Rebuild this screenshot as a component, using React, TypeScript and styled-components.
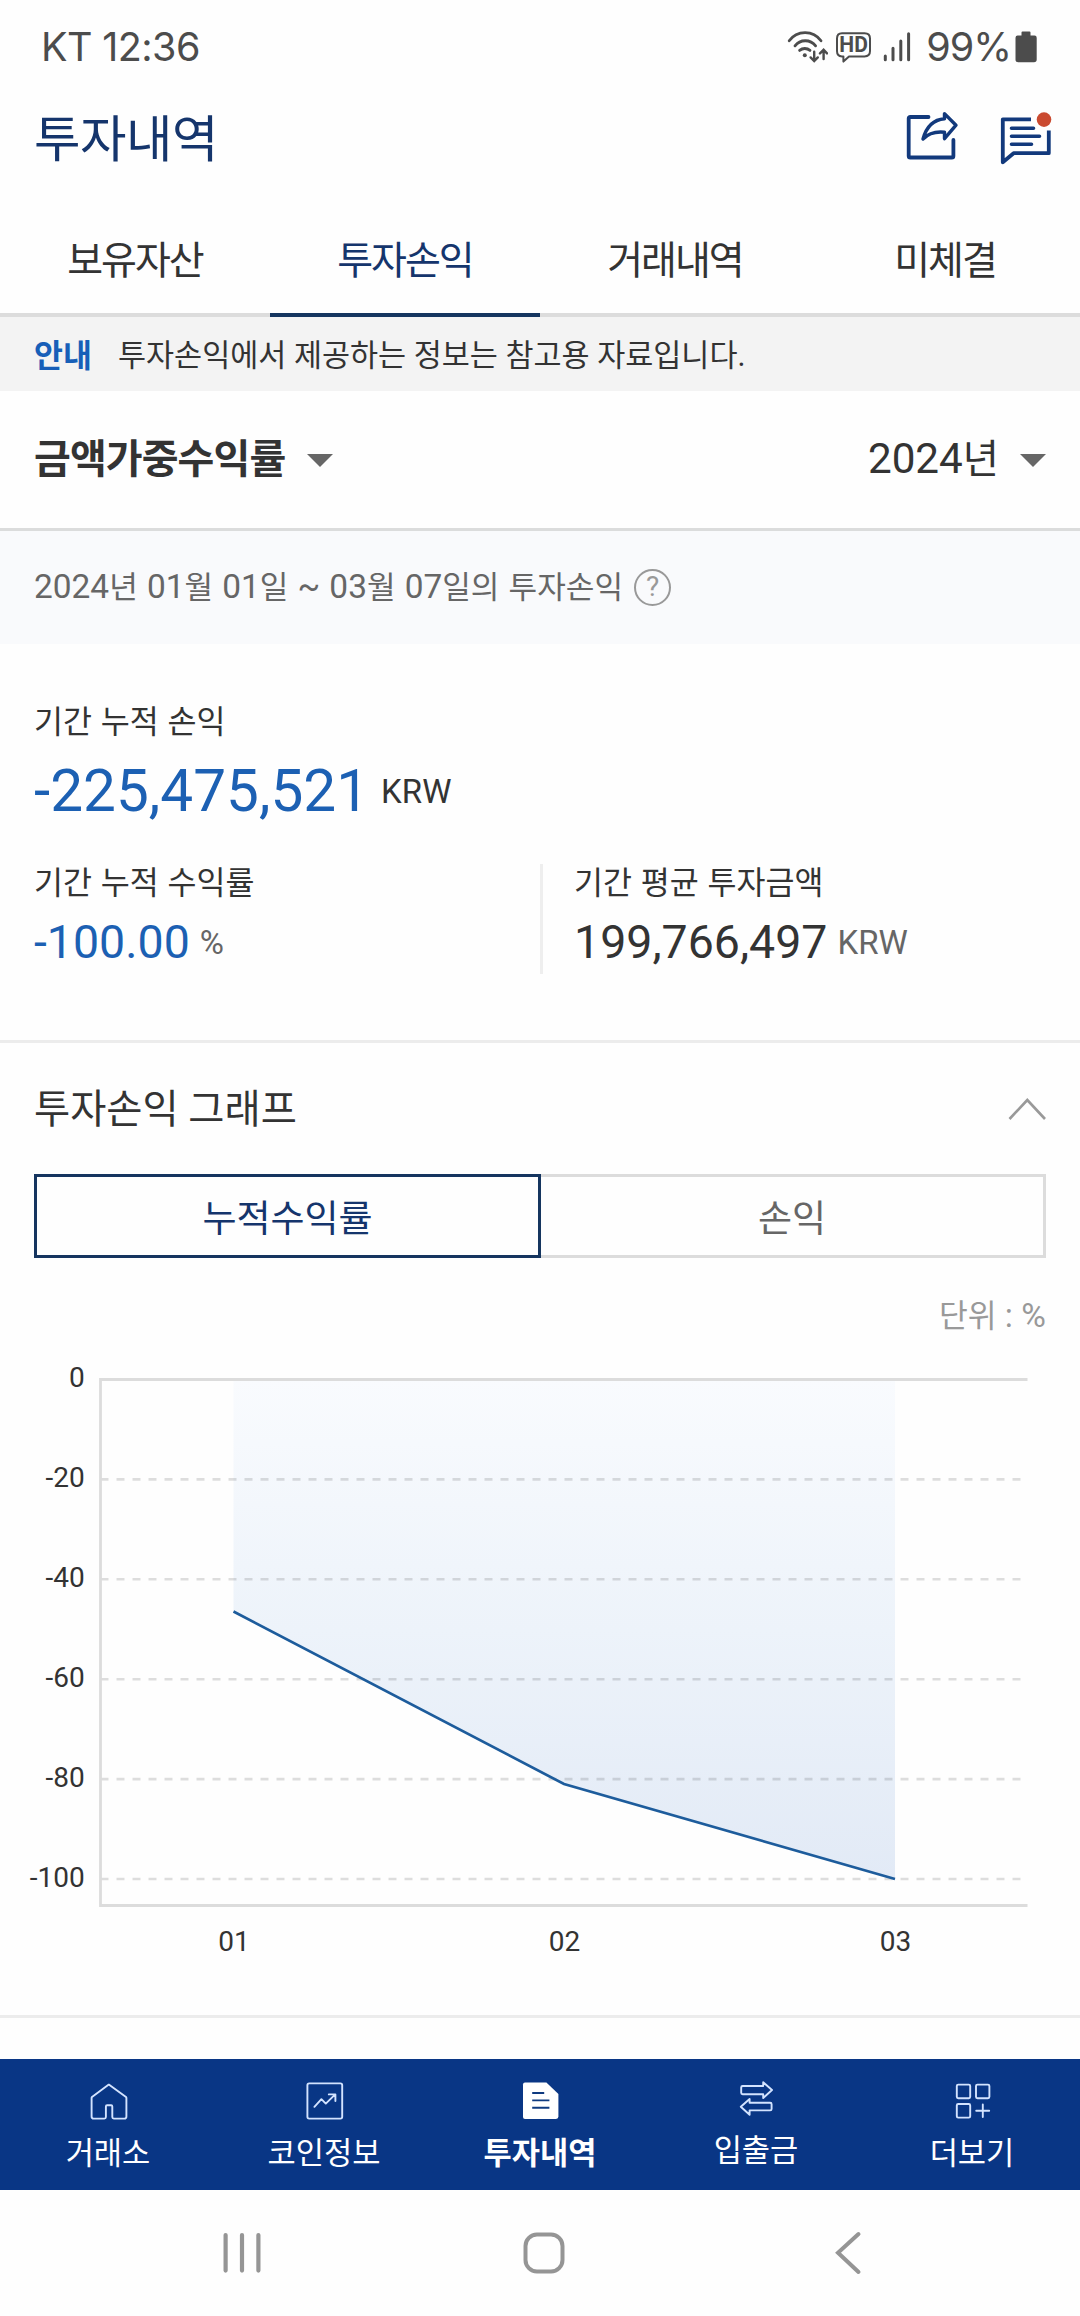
import React from "react";
import styled, { createGlobalStyle, css } from "styled-components";

const navy = "#15356c";
const blue = "#1c60b3";
const ink = "#333333";
const gray = "#666666";
const sans = `Roboto, "Noto Sans CJK KR", sans-serif`;

const GlobalStyle = createGlobalStyle`
  * { box-sizing: border-box; }
  body { margin: 0; background: #fefefe; }
  button { border: 0; padding: 0; background: none; font: inherit; color: inherit; }
  svg { display: block; flex: none; }
`;

const Screen = styled.div`
  width: 1080px;
  height: 2316px;
  display: flex;
  flex-direction: column;
  overflow: hidden;
  background: #fefefe;
  color: ${ink};
  font-family: ${sans};
`;

/* ---------- status bar ---------- */

const StatusBar = styled.div`
  height: 94px;
  padding: 0 43px 0 41px;
  display: flex;
  align-items: center;
  justify-content: space-between;
  color: #4c4c4c;
  font-family: Inter, sans-serif;
  font-size: 39.5px;
`;

const Clock = styled.span`
  letter-spacing: -0.6px;
`;

const StatusIcons = styled.div`
  display: flex;
  align-items: center;
`;

const Percent = styled.span`
  margin: 0 4px 0 15px;
  letter-spacing: -1px;
`;

const HdIcon = styled.svg`
  margin: 0 11px 0 7px;
`;

/* ---------- header and tabs ---------- */

const Header = styled.header`
  height: 90px;
  margin-bottom: 21px;
  padding: 0 28px 0 34px;
  display: flex;
  align-items: center;
  justify-content: space-between;
`;

const Title = styled.h1`
  margin: 0;
  padding-top: 2px;
  color: ${navy};
  font-size: 50.5px;
  font-weight: 400;
  line-height: 64px;
  letter-spacing: -0.5px;
`;

const HeaderActions = styled.div`
  display: flex;
  gap: 40px;
`;

const Tabs = styled.nav`
  height: 112px;
  display: grid;
  grid-template-columns: repeat(4, 1fr);
`;

const Tab = styled.button<{ $active?: boolean }>`
  padding-bottom: 4px;
  border-bottom: 4px solid ${(p) => (p.$active ? "#15355f" : "#dcdcdc")};
  color: ${(p) => (p.$active ? navy : ink)};
  font-size: 39px;
  letter-spacing: -2px;
`;

const Notice = styled.div`
  height: 74px;
  padding: 0 34px 3px;
  display: flex;
  align-items: center;
  gap: 26px;
  background: #f3f3f3;
  font-size: 30.5px;
`;

const NoticeTag = styled.strong`
  color: #175fb8;
  font-size: 31.5px;
`;

/* ---------- filters ---------- */

const Filters = styled.div`
  height: 140px;
  padding: 0 34px;
  display: flex;
  align-items: center;
  justify-content: space-between;
  border-bottom: 3px solid #dbdcdc;
`;

const Select = styled.button<{ $strong?: boolean }>`
  display: flex;
  align-items: center;
  gap: ${(p) => (p.$strong ? 22 : 21)}px;
  font-size: 39.3px;
  line-height: 50px;
  ${(p) =>
    p.$strong &&
    css`
      font-size: 40px;
      font-weight: 700;
      letter-spacing: -0.9px;
    `}
`;

const Caret = styled.i`
  margin-top: 2px;
  border: 13px solid transparent;
  border-top-color: ${gray};
  border-bottom-width: 0;
`;

const Num = styled.span`
  font-size: 1.075em;
`;

const Period = styled.div`
  height: 113px;
  padding: 0 34px 1px;
  display: flex;
  align-items: center;
  gap: 11px;
  background: #f9fafc;
  color: ${gray};
  font-size: 31.1px;
  line-height: 40px;
  word-spacing: 1.4px;
`;

const Help = styled.button`
  width: 37px;
  height: 37px;
  border: 2.5px solid #999;
  border-radius: 50%;
  color: #999;
  font-size: 28px;
  line-height: 32px;
  text-align: center;
`;

/* ---------- summary ---------- */

const Summary = styled.section`
  height: 399px;
  padding-top: 56px;
  border-bottom: 3px solid #ececec;
`;

const Total = styled.div`
  padding: 0 34px;
`;

const Label = styled.div<{ $height: number }>`
  font-size: 31.5px;
  line-height: ${(p) => p.$height}px;
  word-spacing: 1px;
`;

const Value = styled.div<{ $size: number; $height: number; $loss?: boolean }>`
  height: ${(p) => p.$height}px;
  margin-top: 10px;
  display: flex;
  align-items: center;
  color: ${(p) => (p.$loss ? blue : ink)};
  font-size: ${(p) => p.$size}px;
  line-height: 1;
`;

const Unit = styled.span<{ $dark?: boolean }>`
  margin-left: ${(p) => (p.$dark ? 12 : 10)}px;
  color: ${(p) => (p.$dark ? ink : gray)};
  font-size: 33px;
`;

const Split = styled.div`
  height: 110px;
  margin-top: 38px;
  display: grid;
  grid-template-columns: 1fr 1fr;
`;

const Cell = styled.div`
  padding: 1px 0 0 34px;
  & + & {
    padding-left: 31px;
    border-left: 3px solid #eeeeee;
  }
`;

/* ---------- graph ---------- */

const Graph = styled.section`
  height: 975px;
  border-bottom: 3px solid #ececec;
`;

const GraphHead = styled.div`
  height: 131px;
  padding: 0 34px;
  display: flex;
  align-items: center;
  justify-content: space-between;
`;

const GraphTitle = styled.h2`
  margin: 0;
  padding-top: 2px;
  font-size: 39.3px;
  font-weight: 400;
  line-height: 50px;
`;

const Toggle = styled.div`
  height: 84px;
  margin: 0 34px;
  display: grid;
  grid-template-columns: 507px 505px;
`;

const ToggleItem = styled.button<{ $active?: boolean }>`
  border: 3px solid ${(p) => (p.$active ? "#15355f" : "#dcdcdc")};
  border-left-width: ${(p) => (p.$active ? 3 : 0)}px;
  color: ${(p) => (p.$active ? navy : gray)};
  font-size: 37px;
`;

const UnitNote = styled.div`
  margin-top: 38px;
  padding-right: 34px;
  color: #999999;
  font-size: 31.3px;
  line-height: 40px;
  text-align: right;
  word-spacing: 0.6px;
`;

const AxisText = styled.text`
  fill: ${ink};
  font-family: ${sans};
  font-size: 28px;
`;

/* ---------- bottom bars ---------- */

const BottomNav = styled.nav`
  height: 131px;
  margin-top: 41px;
  display: grid;
  grid-template-columns: repeat(5, 1fr);
  background: #093685;
  color: #ffffff;
`;

const NavItem = styled.button<{ $active?: boolean; $top?: number }>`
  padding-top: ${(p) => p.$top ?? 22}px;
  display: flex;
  flex-direction: column;
  align-items: center;
  gap: 15px;
  font-size: 30.7px;
  font-weight: ${(p) => (p.$active ? 700 : 400)};
  line-height: 36px;
`;

const SystemNav = styled.div`
  height: 126px;
  padding: 0 218px 0 221px;
  display: flex;
  align-items: center;
  justify-content: space-between;
`;

const HomeKey = styled.svg`
  margin-right: 10px;
`;

/** Sets digits and signs a little larger than the Hangul beside them. */
const Mixed = ({ text }: { text: string }) => (
  <span>
    {text
      .split(/([0-9~%:]+)/)
      .map((part, i) => (i % 2 ? <Num key={i}>{part}</Num> : part))}
  </span>
);

const WifiIcon = () => (
  <svg width="42" height="34" fill="none" stroke="#4c4c4c" strokeWidth="2.8" strokeLinecap="round">
    <path d="M3.2 10.8A19.5 19.5 0 0 1 35 10.8M9 15.8A13 13 0 0 1 29.6 15.8M13.6 20.4A8 8 0 0 1 24 20.4" />
    <circle cx="18.8" cy="25.2" r="2" fill="#4c4c4c" stroke="none" />
    <g strokeWidth="2.4">
      <path d="M28.2 21.8V30.6M24.6 27.4L28.2 31L31.8 27.4" />
      <path d="M37.6 29V20.2M34 23.4L37.6 19.8L41 23.4" />
    </g>
  </svg>
);

const Hd = () => (
  <HdIcon width="37" height="34">
    <path
      d="M7 3.2H29.5Q35 3.2 35 8.5V21Q35 26.4 29.5 26.4H14L8.4 31.6V26.4H7Q2 26.4 2 21V8.5Q2 3.2 7 3.2Z"
      fill="none"
      stroke="#4c4c4c"
      strokeWidth="2"
      strokeLinejoin="round"
    />
    <text
      x="18.6"
      y="22.4"
      textAnchor="middle"
      textLength="28.5"
      lengthAdjust="spacingAndGlyphs"
      fontFamily="Roboto, sans-serif"
      fontWeight="700"
      fontSize="22"
      fill="#4c4c4c"
    >
      HD
    </text>
  </HdIcon>
);

const SignalIcon = () => (
  <svg width="28" height="34" stroke="#4c4c4c" strokeWidth="3" strokeLinecap="round">
    <path d="M2.3 26V29.8M10 18.3V29.8M17.8 11V29.8M25.6 3.8V29.8" />
  </svg>
);

const BatteryIcon = () => (
  <svg width="22" height="32" fill="#4c4c4c">
    <path d="M6.5 1.5Q6.5 0.5 7.5 0.5H14.5Q15.5 0.5 15.5 1.5V4.5H19.5Q21.7 4.5 21.7 6.7V28.5Q21.7 31.2 19 31.2H3Q0.5 31.2 0.5 28.5V6.7Q0.5 4.5 2.7 4.5H6.5Z" />
  </svg>
);

const ShareIcon = () => (
  <svg
    width="54"
    height="54"
    fill="none"
    stroke="#12397c"
    strokeWidth="3.8"
    strokeLinejoin="round"
    strokeLinecap="round"
  >
    <path d="M23.5 7H5.3Q3.7 7 3.7 8.6V45.9Q3.7 47.5 5.3 47.5H46.8Q48.4 47.5 48.4 45.9V30" />
    <path d="M39.5 3.6L51 15.2L39.5 28.6V22.2C30 21.2 23.5 23.2 18 29C21.5 16.5 29.5 9.6 39.5 8.8Z" strokeWidth="3.4" />
  </svg>
);

const MessageIcon = () => (
  <svg
    width="53"
    height="58"
    fill="none"
    stroke="#12397c"
    strokeWidth="3.8"
    strokeLinejoin="round"
  >
    <path d="M32 9.3H3.8V52.3L14.6 43.2H49.8V20.6" />
    <path d="M12.5 18.2H34.5M12.5 26.2H40.5M12.5 34.2H32.5" strokeLinecap="round" strokeWidth="3.6" />
    <circle cx="45" cy="9.6" r="7.3" fill="#ca4a30" stroke="none" />
  </svg>
);

const ChevronUp = () => (
  <svg width="38" height="24" fill="none" stroke="#999" strokeWidth="2.6">
    <path d="M1.5 22L19.3 3L37 22" />
  </svg>
);

/* ---------- chart ---------- */

const LEFT = 100.5;
const RIGHT = 1027.5;
const ZERO = 42.5;
const STEP = 99.9;
const BOTTOM = 568.5;

const ticks = [0, -20, -40, -60, -80, -100];
const points = [
  { label: "01", x: 233.5, y: 274.5 },
  { label: "02", x: 564, y: 447 },
  { label: "03", x: 895, y: 542 },
];

const Chart = () => {
  const line = points.map((p) => `${p.x},${p.y}`).join(" ");
  const last = points[points.length - 1];
  return (
    <svg width="1080" height="638">
      <defs>
        <linearGradient id="area" x1="0" y1="0" x2="0" y2="1">
          <stop offset="0" stopColor="#f9fbfe" />
          <stop offset="0.5" stopColor="#edf3fa" />
          <stop offset="1" stopColor="#e2eaf6" />
        </linearGradient>
      </defs>
      <polygon points={`${points[0].x},${ZERO} ${line} ${last.x},${ZERO}`} fill="url(#area)" />
      {ticks.map((t, i) => (
        <g key={t}>
          {i > 0 && (
            <line
              x1={LEFT}
              x2={RIGHT}
              y1={ZERO + i * STEP}
              y2={ZERO + i * STEP}
              stroke="#000"
              strokeOpacity="0.13"
              strokeWidth="2.6"
              strokeDasharray="8 8"
            />
          )}
          <AxisText x="84.8" y={ZERO + i * STEP + 7.5} textAnchor="end">
            {t}
          </AxisText>
        </g>
      ))}
      <path
        d={`M${RIGHT} ${ZERO}H${LEFT}V${BOTTOM}H${RIGHT}`}
        fill="none"
        stroke="#dcdcdc"
        strokeWidth="2.8"
      />
      <polyline points={line} fill="none" stroke="#1d5c9c" strokeWidth="2.7" />
      {points.map((p) => (
        <AxisText key={p.label} x={p.x + 0.5} y="613.5" textAnchor="middle">
          {p.label}
        </AxisText>
      ))}
    </svg>
  );
};

/* ---------- bottom icons ---------- */

const NavIcon = styled.svg.attrs({ width: 40, height: 40, viewBox: "0 0 40 40" })`
  fill: none;
  stroke: #d3e3ff;
  stroke-width: 1.9;
  stroke-linejoin: round;
  stroke-linecap: round;
`;

const HomeIcon = () => (
  <NavIcon>
    <path d="M20.8 3.6L38 16Q38.4 16.4 38.4 17V35.4Q38.4 37.6 36.2 37.6H25.8Q24.3 37.6 24.3 36.1V25.4Q24.3 24.2 23.1 24.2H19.1Q17.9 24.2 17.9 25.4V36.1Q17.9 37.6 16.4 37.6H5.8Q3.6 37.6 3.6 35.4V17Q3.6 16.4 4 16Z" />
  </NavIcon>
);

const CoinIcon = () => (
  <NavIcon>
    <rect x="3.4" y="2.4" width="34.8" height="35.2" rx="1.8" />
    <path d="M10.4 25.8L17.4 18.2L21.8 22.6L31.2 13.4M24.8 13.4H31.4V20" />
  </NavIcon>
);

const DocIcon = () => (
  <NavIcon>
    <path
      d="M5 1.6H26.4L38.4 13V35.6Q38.4 38 36 38H5Q3 38 3 36V3.6Q3 1.6 5 1.6Z"
      fill="#fff"
      stroke="none"
    />
    <path d="M12.2 12H24.2M12.2 19.4H29.4M12.2 26.8H29.4" stroke="#0e3a80" strokeLinecap="butt" />
  </NavIcon>
);

const TransferIcon = () => (
  <NavIcon>
    <path d="M27.2 4.2L36 12L27.2 20V16.2H6.6Q5.2 16.2 5.2 14.8V9.4Q5.2 8 6.6 8H27.2Z" />
    <path d="M13.6 21L4.8 28.8L13.6 36.8V32.4H34.2Q35.6 32.4 35.6 31V26.2Q35.6 24.8 34.2 24.8H13.6Z" />
  </NavIcon>
);

const MoreIcon = () => (
  <NavIcon>
    <rect x="4.8" y="3.6" width="13.4" height="13.6" rx="1.4" />
    <rect x="24" y="3.6" width="13.4" height="13.6" rx="1.4" />
    <rect x="4.8" y="23" width="13.4" height="13.6" rx="1.4" />
    <path d="M30.8 23.4V36M24.2 29.8H37.2" />
  </NavIcon>
);

export default function App() {
  return (
    <>
      <GlobalStyle />
      <Screen>
        <StatusBar>
          <Clock>KT 12:36</Clock>
          <StatusIcons>
            <WifiIcon />
            <Hd />
            <SignalIcon />
            <Percent>99%</Percent>
            <BatteryIcon />
          </StatusIcons>
        </StatusBar>

        <Header>
          <Title>투자내역</Title>
          <HeaderActions>
            <ShareIcon />
            <MessageIcon />
          </HeaderActions>
        </Header>

        <Tabs>
          <Tab>보유자산</Tab>
          <Tab $active>투자손익</Tab>
          <Tab>거래내역</Tab>
          <Tab>미체결</Tab>
        </Tabs>

        <Notice>
          <NoticeTag>안내</NoticeTag>
          <span>투자손익에서 제공하는 정보는 참고용 자료입니다.</span>
        </Notice>

        <Filters>
          <Select $strong>
            금액가중수익률
            <Caret />
          </Select>
          <Select>
            <Mixed text="2024년" />
            <Caret />
          </Select>
        </Filters>

        <Period>
          <Mixed text="2024년 01월 01일 ~ 03월 07일의 투자손익" />
          <Help>?</Help>
        </Period>

        <Summary>
          <Total>
            <Label $height={46}>기간 누적 손익</Label>
            <Value $size={58.5} $height={70} $loss>
              -225,475,521<Unit $dark>KRW</Unit>
            </Value>
          </Total>
          <Split>
            <Cell>
              <Label $height={38}>기간 누적 수익률</Label>
              <Value $size={46.5} $height={58} $loss>
                -100.00<Unit>%</Unit>
              </Value>
            </Cell>
            <Cell>
              <Label $height={38}>기간 평균 투자금액</Label>
              <Value $size={46.5} $height={58}>
                199,766,497<Unit>KRW</Unit>
              </Value>
            </Cell>
          </Split>
        </Summary>

        <Graph>
          <GraphHead>
            <GraphTitle>투자손익 그래프</GraphTitle>
            <ChevronUp />
          </GraphHead>
          <Toggle>
            <ToggleItem $active>누적수익률</ToggleItem>
            <ToggleItem>손익</ToggleItem>
          </Toggle>
          <UnitNote>
            <Mixed text="단위 : %" />
          </UnitNote>
          <Chart />
        </Graph>

        <BottomNav>
          <NavItem>
            <HomeIcon />
            거래소
          </NavItem>
          <NavItem>
            <CoinIcon />
            코인정보
          </NavItem>
          <NavItem $active>
            <DocIcon />
            투자내역
          </NavItem>
          <NavItem $top={19}>
            <TransferIcon />
            입출금
          </NavItem>
          <NavItem>
            <MoreIcon />
            더보기
          </NavItem>
        </BottomNav>

        <SystemNav>
          <svg width="42" height="42" stroke="#959595" strokeWidth="4.2" strokeLinecap="round">
            <path d="M4.6 3V38.6M21 3V38.6M37.4 3V38.6" />
          </svg>
          <HomeKey width="42" height="42" fill="none" stroke="#959595" strokeWidth="4">
            <rect x="2.5" y="2.5" width="37" height="37" rx="11.5" />
          </HomeKey>
          <svg width="28" height="44" fill="none" stroke="#959595" strokeWidth="4" strokeLinecap="round">
            <path d="M24.5 3L4 21.7L24.5 41" />
          </svg>
        </SystemNav>
      </Screen>
    </>
  );
}
